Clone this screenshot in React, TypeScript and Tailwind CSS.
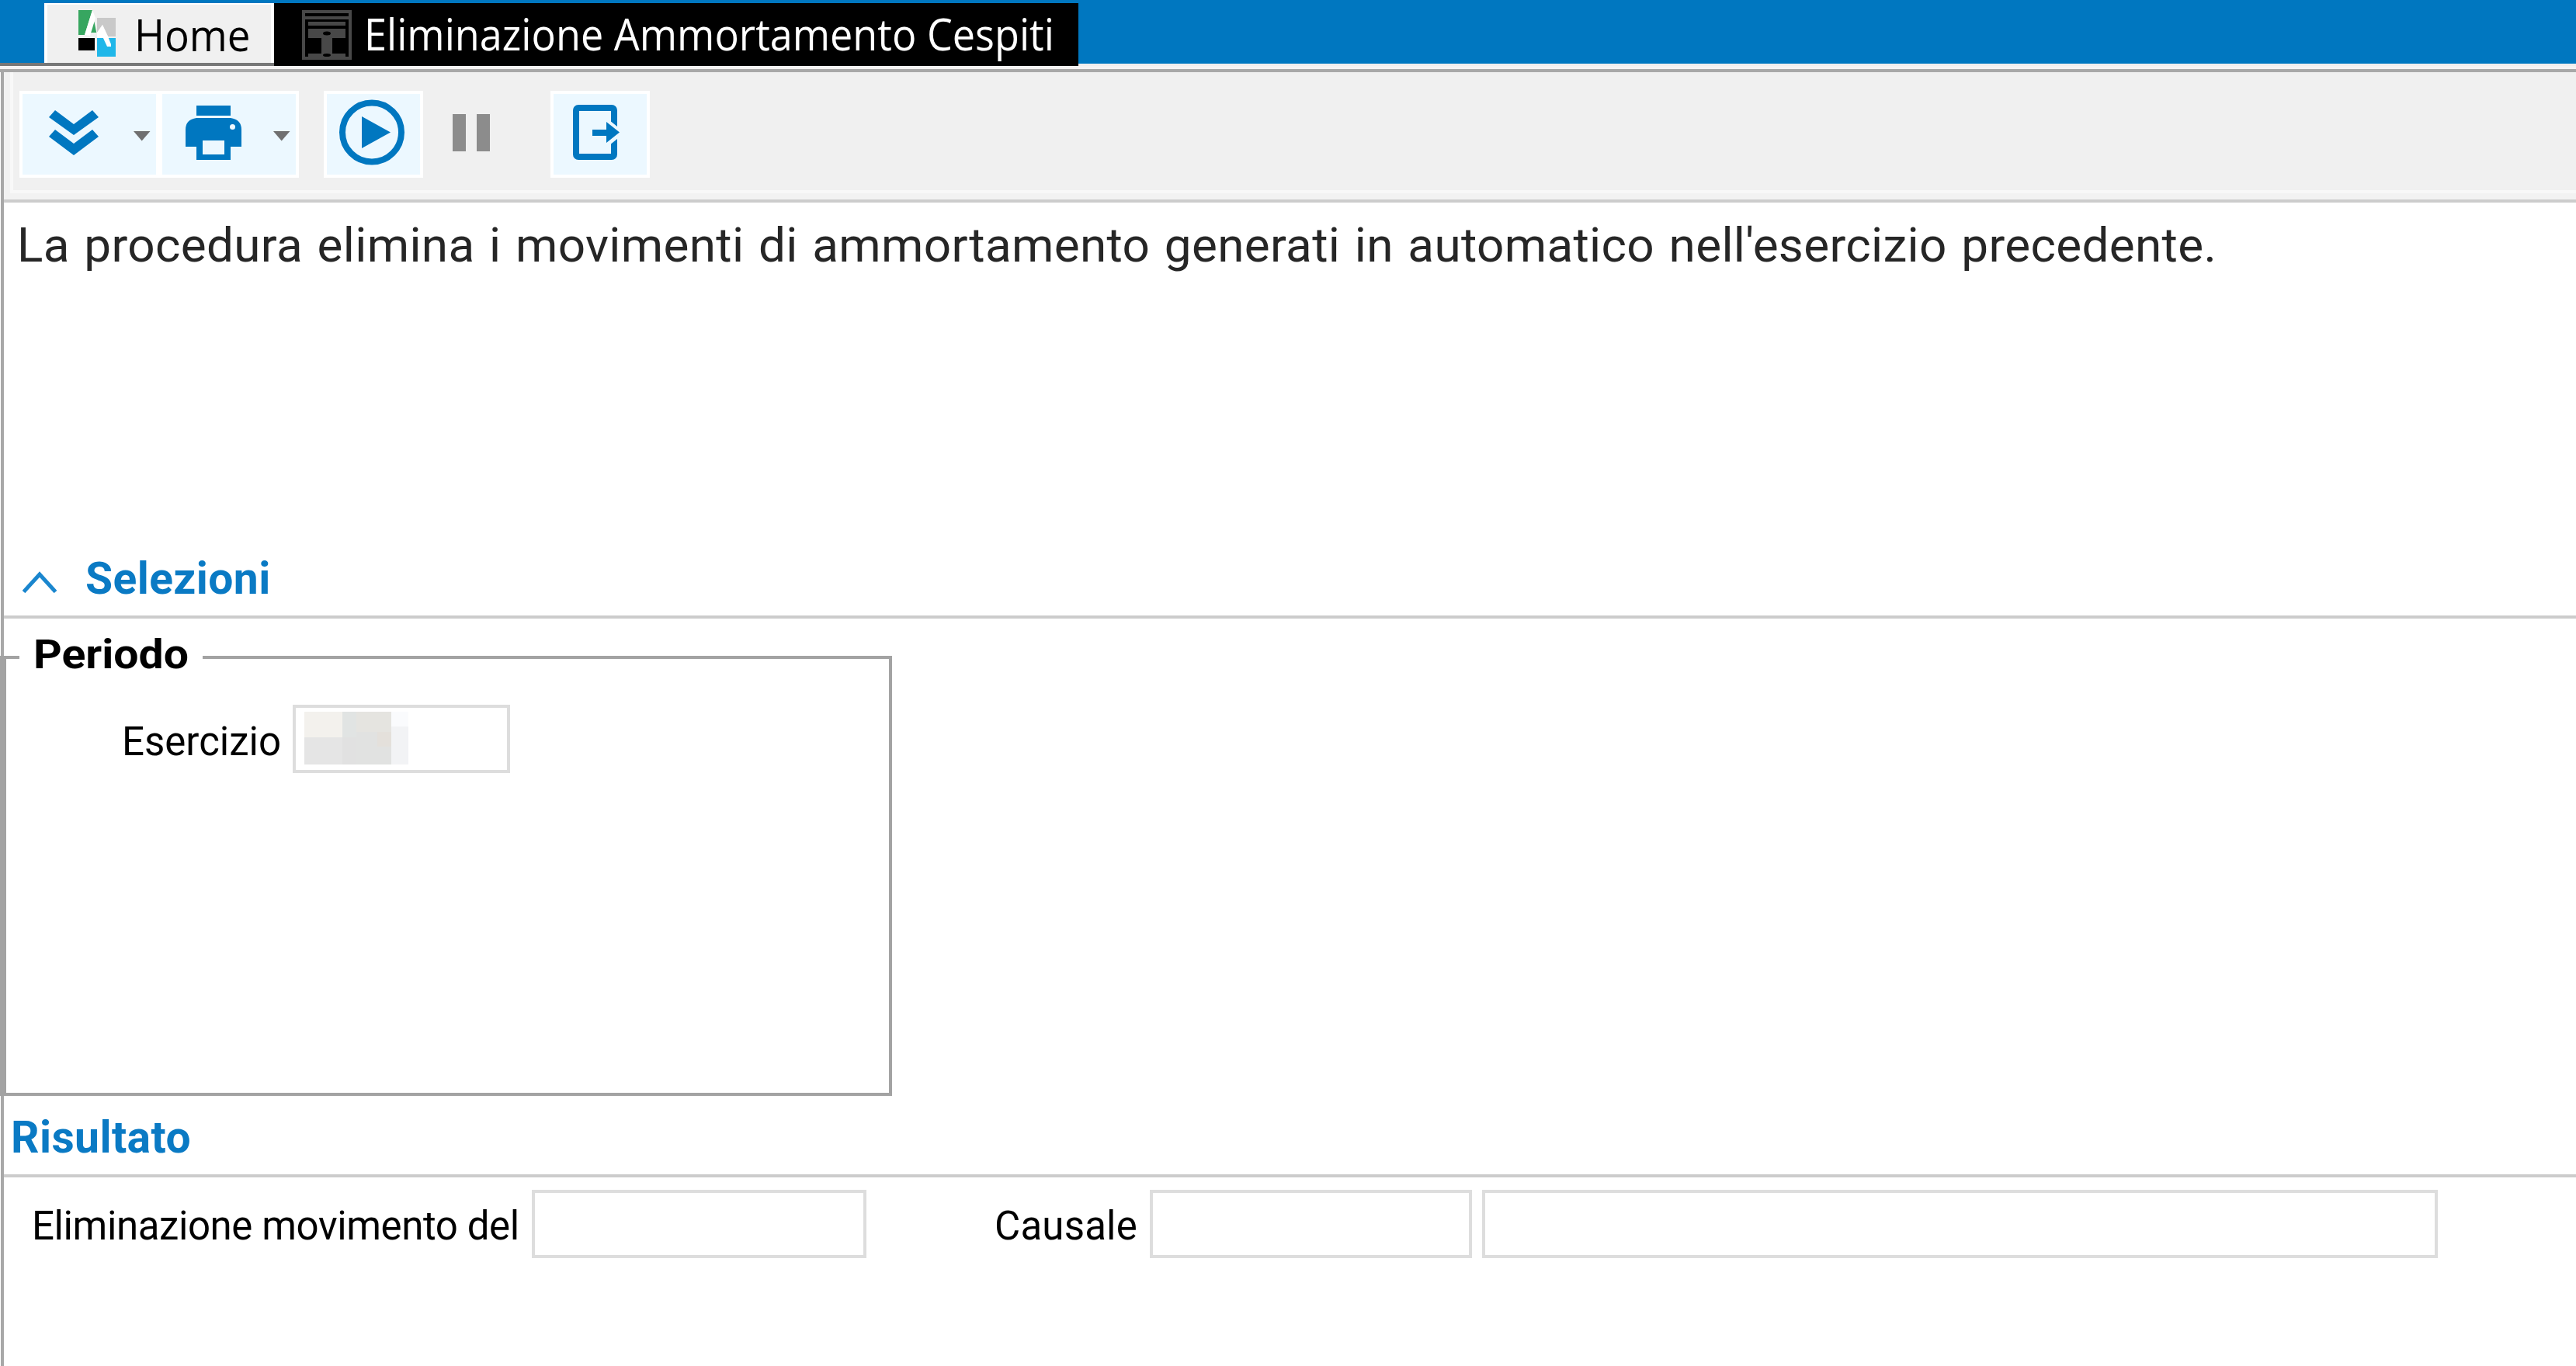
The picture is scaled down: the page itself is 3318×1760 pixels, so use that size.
import React from 'react';
import clsx from 'clsx';

function HomeLogo() {
  return (
    <svg viewBox="0 0 48 60" className="h-[60px] w-[48px] shrink-0">
      <path d="M0 0H18L8 32H0Z" fill="#37a660" />
      <path d="M20 18L22 28L16 28Z" fill="#37a660" stroke="#37a660" strokeWidth="2" />
      <path d="M24 10H48V34H38L31 19L24 29Z" fill="#c9c9c9" />
      <path d="M18 0L8 32L15 33L22 10Z" fill="#ffffff" />
      <path d="M24 29L31 19L40 38H24Z" fill="#ffffff" />
      <rect x="0" y="36" width="21" height="16" fill="#000000" />
      <rect x="24" y="36" width="24" height="24" fill="#20b7e9" />
      <path d="M31 34L37 47H42V44L38 34Z" fill="#ffffff" />
    </svg>
  );
}

function ProcedureIcon() {
  return (
    <svg viewBox="0 0 64 64" className="h-[64px] w-[64px] shrink-0" fill="#484848">
      <rect x="2" y="2" width="60" height="60" fill="none" stroke="#484848" strokeWidth="4" />
      <rect x="2" y="8" width="60" height="4" />
      <rect x="8" y="15" width="48" height="5" />
      <rect x="8" y="24" width="48" height="12" />
      <rect x="25" y="36" width="14" height="22" />
      <rect x="8" y="56" width="48" height="6" />
      <ellipse cx="32" cy="30" rx="5" ry="2.5" fill="#000000" />
      <ellipse cx="32" cy="58" rx="5" ry="2" fill="#000000" />
    </svg>
  );
}

interface ToolButtonProps {
  label: string;
  wide?: boolean;
  className?: string;
  children: React.ReactNode;
}

function ToolButton({ label, wide, className, children }: ToolButtonProps) {
  return (
    <button
      aria-label={label}
      className={clsx('h-[112px] shrink-0 border-4 border-white bg-[#ecf8ff]', wide ? 'w-[180px]' : 'w-[128px]', className)}
    >
      <svg viewBox={wide ? '0 0 172 104' : '0 0 120 104'} className="h-full w-full" fill="#0077c0">
        {children}
        {wide && <path d="M143 48H164.500L153.700 60.500Z" fill="#707070" />}
      </svg>
    </button>
  );
}

function Toolbar() {
  return (
    <div className="h-[168px] border-b-4 border-[#cccccc] bg-[#f2f2f2] pl-[8px]">
      <div className="flex h-[156px] border-b-4 border-l-4 border-[#f8f8f8] bg-[#f0f0f0] pl-[8px] pt-6">
        <ToolButton label="Espandi" wide>
          <path d="M34 30L42 21L66 39L90 21L98 30L66 53Z" />
          <path d="M34 55L42 46L66 64L90 46L98 55L66 79Z" />
        </ToolButton>
        <ToolButton label="Stampa" wide>
          <rect x="44" y="15" width="44" height="13" />
          <path d="M44 31H88Q102 33 102 46V68H88V85H44V68H30V46Q30 33 44 31Z" />
          <rect x="52" y="60" width="28" height="18" fill="#ecf8ff" />
          <circle cx="90.500" cy="42.500" r="3.500" fill="#ecf8ff" />
        </ToolButton>
        <ToolButton label="Esegui" className="ml-8">
          <circle cx="58" cy="49.500" r="38" fill="none" stroke="#0077c0" strokeWidth="8" />
          <path d="M45 29V70L82 49.500Z" />
        </ToolButton>
        <div className="flex w-[164px] shrink-0 gap-[14px] pl-[38px] pt-[30px]">
          <div className="h-[48px] w-[17px] bg-[#8c8c8c]" />
          <div className="h-[48px] w-[17px] bg-[#8c8c8c]" />
        </div>
        <ToolButton label="Esci">
          <rect x="29" y="18" width="49" height="63" rx="3" fill="none" stroke="#0077c0" strokeWidth="8" />
          <path d="M67 30L92 50L67 70Z" fill="#ecf8ff" />
          <path d="M50 46H68V36L85 49.500L68 63V54H50Z" />
        </ToolButton>
      </div>
    </div>
  );
}

function SectionHeader({ children, className }: { children: React.ReactNode; className?: string }) {
  return (
    <div
      className={clsx(
        'flex h-[99px] items-center border-b-4 border-[#cccccc] text-[57px] leading-none font-bold tracking-[0.4px] text-[#0a7ac4]',
        className
      )}
    >
      {children}
    </div>
  );
}

function Field({ className, children }: { className: string; children?: React.ReactNode }) {
  return <div className={clsx('h-[88px] shrink-0 border-4 border-[#dddddd] bg-white', className)}>{children}</div>;
}

export default function App() {
  return (
    <div className="flex h-[1760px] w-full flex-col overflow-hidden bg-white font-['Roboto',sans-serif] text-[51px] leading-none whitespace-nowrap text-black">
      {/* Tab strip */}
      <div className="flex h-[85px] bg-[#f0eeee] font-['Open_Sans',sans-serif] text-[56px]">
        <div className="h-full w-[57px] border-b-4 border-[#777777] bg-[#0077c0]" />
        <div className="h-full w-[296px] border-t-4 border-b-4 border-t-[#0077c0] border-b-[#777777] bg-[#f0f0f0]">
          <div className="flex h-full border-x-4 border-t-2 border-white pl-[40px]">
            <div className="pt-[7px]">
              <HomeLogo />
            </div>
            <span className="ml-[24px] origin-left scale-x-[0.945] pt-[10px]">Home</span>
          </div>
        </div>
        <div className="flex h-full w-[1036px] border-t-4 border-[#0077c0] bg-black pl-[36px]">
          <div className="pt-[9px]">
            <ProcedureIcon />
          </div>
          <span className="ml-[16px] origin-left scale-x-[0.932] pt-[11px] text-white">
            Eliminazione Ammortamento Cespiti
          </span>
        </div>
        <div className="h-[82px] flex-1 bg-[#0077c0]" />
      </div>
      <div className="h-[8px] shrink-0 border-b-4 border-[#a8a8a8] bg-[#f5f3f3]" />

      <div className="ml-px flex-1 border-l-4 border-[#a8a8a8]">
        <Toolbar />

        <div className="h-[437px] pl-[17px]">
          <p className="text-[62px] leading-[110px] tracking-[0.35px] [word-spacing:2.8px] text-[#262626]">
            La procedura elimina i movimenti di ammortamento generati in automatico nell'esercizio precedente.
          </p>
        </div>

        {/* Selezioni */}
        <SectionHeader className="pl-[24px]">
          <svg viewBox="0 0 44 28" className="mt-[9px] mr-[37px] h-[28px] w-[44px]" fill="none" stroke="#1a86ce" strokeWidth="5">
            <path d="M1.500 26.500L22 4L42.500 26.500" />
          </svg>
          Selezioni
        </SectionHeader>
        <div className="mt-[48px] -ml-[5px] h-[567px] w-[1149px] border-4 border-l-8 border-[#a3a3a3]">
          <div className="-mt-[35px] ml-[17px] h-[60px] w-[236px] bg-white pl-[18px] leading-[60px] font-bold">
            <span className="inline-block origin-left scale-x-[1.12]">Periodo</span>
          </div>
          <div className="mt-[34px] flex pl-[149px]">
            <label className="w-[220px] pt-[22px]">Esercizio</label>
            <Field className="w-[280px] pt-[5px] pl-[11px]">
              {/* Masked value */}
              <svg viewBox="0 0 134 68" className="h-[68px] w-[134px]" shapeRendering="crispEdges">
                <rect x="0" y="0" width="49" height="33" fill="#f3f1ed" />
                <rect x="0" y="33" width="49" height="35" fill="#e5e5e5" />
                <rect x="49" y="0" width="18" height="33" fill="#e1e4e3" />
                <rect x="49" y="33" width="18" height="35" fill="#e1e1e1" />
                <rect x="67" y="0" width="45" height="26" fill="#e5e4e0" />
                <rect x="67" y="26" width="45" height="42" fill="#e1e2e1" />
                <rect x="94" y="26" width="18" height="19" fill="#e4e0db" />
                <rect x="112" y="0" width="22" height="19" fill="#fafbfd" />
                <rect x="112" y="19" width="22" height="49" fill="#f2f3f5" />
              </svg>
            </Field>
          </div>
        </div>

        {/* Risultato */}
        <SectionHeader className="mt-[6px] pl-[9px]">Risultato</SectionHeader>
        <div className="mt-[16px] flex pl-[36px]">
          <label className="w-[644px] pt-[21px] tracking-[-0.4px]">Eliminazione movimento del</label>
          <Field className="w-[431px]" />
          <label className="ml-[165px] w-[200px] pt-[21px] tracking-[0.2px]">Causale</label>
          <Field className="w-[415px]" />
          <Field className="ml-[13px] w-[1231px]" />
        </div>
      </div>
    </div>
  );
}
